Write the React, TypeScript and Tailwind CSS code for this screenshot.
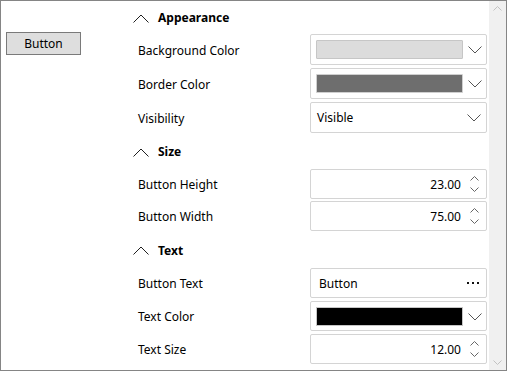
const font = "font-['Segoe_UI','Noto_Sans',sans-serif]"

function ChevronUp() {
  return (
    <svg width="16" height="9" viewBox="0 0 16 9" className="shrink-0">
      <polyline points="0.5,8.5 8,1 15.5,8.5" fill="none" stroke="#1f1f1f" strokeWidth="1" />
    </svg>
  )
}

function ChevronDown() {
  return (
    <svg width="14" height="8" viewBox="0 0 14 8">
      <polyline points="0.5,0.5 7,7 13.5,0.5" fill="none" stroke="#555" strokeWidth="1" />
    </svg>
  )
}

function Spinner() {
  return (
    <div className="flex w-[24px] flex-col items-center gap-[6px]">
      <svg width="9" height="5" viewBox="0 0 9 5">
        <polyline points="0.5,4.5 4.5,0.5 8.5,4.5" fill="none" stroke="#666" strokeWidth="1" />
      </svg>
      <svg width="9" height="5" viewBox="0 0 9 5">
        <polyline points="0.5,0.5 4.5,4.5 8.5,0.5" fill="none" stroke="#666" strokeWidth="1" />
      </svg>
    </div>
  )
}

function Header({ title, className }: { title: string; className: string }) {
  return (
    <div className={`flex items-center gap-[9px] pl-[12px] pt-[2px] ${className}`}>
      <ChevronUp />
      <span className="text-[12px] font-bold text-black">{title}</span>
    </div>
  )
}

function Row({ label, h, className = '', children }: { label: string; h: string; className?: string; children: React.ReactNode }) {
  return (
    <div className={`flex ${h} ${className}`}>
      <div className="flex w-[189px] items-center pl-[17px] pt-[2px] text-[12px] text-black">{label}</div>
      <div className="flex w-[177px] items-center rounded-[2px] border border-[#d4d4d4] bg-white">{children}</div>
    </div>
  )
}

function ColorBox({ color, edge }: { color: string; edge: string }) {
  return (
    <>
      <div className="ml-[5px] h-[19px] w-[147px] rounded-[1px] border" style={{ background: color, borderColor: edge }} />
      <div className="flex flex-1 justify-center pt-[1px]">
        <ChevronDown />
      </div>
    </>
  )
}

function NumberBox({ value }: { value: string }) {
  return (
    <>
      <span className="flex-1 pr-[1px] pt-[1px] text-right text-[12px] text-black">{value}</span>
      <Spinner />
    </>
  )
}

export default function App() {
  return (
    <div className={`flex h-[371px] w-[507px] border border-[#858585] bg-white ${font}`}>
      {/* canvas */}
      <div className="w-[120px] pl-[5px] pt-[31px]">
        <div className="flex h-[23px] w-[75px] items-center justify-center border border-[#7a7a7a] bg-[#dedede] text-[12px] text-black">
          Button
        </div>
      </div>

      {/* properties */}
      <div className="w-[368px] overflow-hidden">
        <Header title="Appearance" className="h-[32px]" />
        <Row label="Background Color" h="h-[31px]" className="mt-[1px]">
          <ColorBox color="#dcdcdc" edge="#c6c6c6" />
        </Row>
        <Row label="Border Color" h="h-[31px]" className="mt-[3px]">
          <ColorBox color="#6e6e6e" edge="#cfcfcf" />
        </Row>
        <Row label="Visibility" h="h-[31px]" className="mt-[3px]">
          <span className="flex-1 pl-[6px] pt-[1px] text-[12px] text-black">Visible</span>
          <div className="flex w-[23px] justify-center pr-[1px] pt-[1px]">
            <ChevronDown />
          </div>
        </Row>

        <Header title="Size" className="h-[36px]" />
        <Row label="Button Height" h="h-[30px]">
          <NumberBox value="23.00" />
        </Row>
        <Row label="Button Width" h="h-[30px]" className="mt-[2px]">
          <NumberBox value="75.00" />
        </Row>

        <Header title="Text" className="h-[37px]" />
        <Row label="Button Text" h="h-[30px]">
          <span className="flex-1 pl-[8px] pt-[1px] text-[12px] text-black">Button</span>
          <svg width="24" height="4" viewBox="0 0 24 4" className="shrink-0">
            <rect x="5" y="1" width="2" height="2" fill="#111" />
            <rect x="10" y="1" width="2" height="2" fill="#111" />
            <rect x="15" y="1" width="2" height="2" fill="#111" />
          </svg>
        </Row>
        <Row label="Text Color" h="h-[30px]" className="mt-[3px]">
          <div className="ml-[5px] h-[19px] w-[147px] border border-[#c6c6c6] bg-black" />
          <div className="flex flex-1 justify-center pt-[1px]">
            <ChevronDown />
          </div>
        </Row>
        <Row label="Text Size" h="h-[30px]" className="mt-[3px]">
          <NumberBox value="12.00" />
        </Row>
      </div>

      {/* scrollbar */}
      <div className="flex w-[17px] flex-col items-center justify-between bg-[#f0f0f0] py-[5px]">
        <svg width="9" height="5" viewBox="0 0 9 5">
          <polyline points="0.5,4.5 4.5,0.5 8.5,4.5" fill="none" stroke="#c2c2c2" strokeWidth="1" />
        </svg>
        <svg width="9" height="5" viewBox="0 0 9 5">
          <polyline points="0.5,0.5 4.5,4.5 8.5,0.5" fill="none" stroke="#c2c2c2" strokeWidth="1" />
        </svg>
      </div>
    </div>
  )
}
